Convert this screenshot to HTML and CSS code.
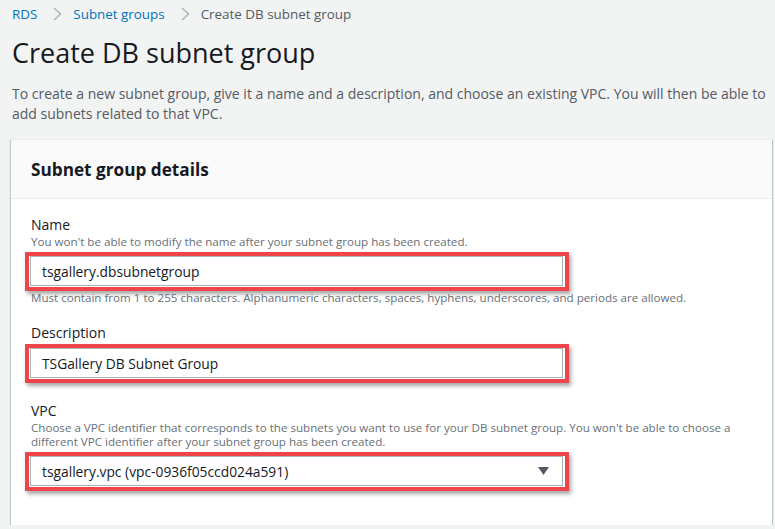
FILE: index.html
```html
<!DOCTYPE html>
<html>
<head>
<meta charset="utf-8">
<link rel="stylesheet" href="styles.css">
</head>
<body>
<div class="page">
  <nav class="crumbs">
    <a class="crumb-link">RDS</a>
    <svg class="chev" width="9" height="14" viewBox="0 0 9 14"><path d="M1 1 L7.5 7 L1 13" fill="none" stroke="#aab7b8" stroke-width="1.5"/></svg>
    <a class="crumb-link">Subnet groups</a>
    <svg class="chev" width="9" height="14" viewBox="0 0 9 14"><path d="M1 1 L7.5 7 L1 13" fill="none" stroke="#aab7b8" stroke-width="1.5"/></svg>
    <span class="crumb-current">Create DB subnet group</span>
  </nav>
  <h1 class="title">Create DB subnet group</h1>
  <p class="intro">To create a new subnet group, give it a name and a description, and choose an existing VPC. You will then be able to add subnets related to that VPC.</p>

  <section class="card">
    <header class="card-head">
      <h2>Subnet group details</h2>
    </header>
    <div class="card-body">
      <div class="field">
        <div class="label">Name</div>
        <div class="hint">You won't be able to modify the name after your subnet group has been created.</div>
        <div class="mark">
          <div class="input">tsgallery.dbsubnetgroup</div>
        </div>
        <div class="hint after">Must contain from 1 to 255 characters. Alphanumeric characters, spaces, hyphens, underscores, and periods are allowed.</div>
      </div>
      <div class="field">
        <div class="label">Description</div>
        <div class="mark tight">
          <div class="input">TSGallery DB Subnet Group</div>
        </div>
      </div>
      <div class="field">
        <div class="label">VPC</div>
        <div class="hint">Choose a VPC identifier that corresponds to the subnets you want to use for your DB subnet group. You won't be able to choose a different VPC identifier after your subnet group has been created.</div>
        <div class="mark">
          <div class="input select">
            <span>tsgallery.vpc (vpc-0936f05ccd024a591)</span>
            <svg width="11" height="8" viewBox="0 0 11 8"><path d="M0 0 H11 L5.5 8 Z" fill="#545b64"/></svg>
          </div>
        </div>
      </div>
    </div>
  </section>
</div>
</body>
</html>
```

FILE: styles.css
```css
html, body {
  margin: 0;
  padding: 0;
  background: #f2f3f3;
}
body {
  font-family: "Open Sans", "Noto Sans", sans-serif;
  color: #16191f;
  overflow: hidden;
}
.page {
  padding: 3px 3px 0 12px;
}
.crumbs {
  display: flex;
  align-items: center;
  font-size: 13.4px;
  height: 22px;
}
.crumb-link {
  color: #0073bb;
}
.crumb-current {
  color: #545b64;
}
.chev {
  margin: 0 11px 0 16px;
}
.title {
  margin: 8px 0 0;
  font-size: 27px;
  font-weight: 400;
  line-height: 40px;
  color: #16191f;
}
.intro {
  margin: 11px 0 0;
  font-size: 14px;
  line-height: 20px;
  color: #545b64;
  width: 760px;
}
.card {
  margin: 15px 0 0 -1px;
  width: 761px;
  background: #fff;
  border-top: 1px solid #eaeded;
  box-shadow: 0 1px 1px 0 rgba(0, 28, 36, 0.3), 1px 1px 1px 0 rgba(0, 28, 36, 0.15), -1px 1px 1px 0 rgba(0, 28, 36, 0.15);
}
.card-head {
  background: #fafafa;
  border-bottom: 1px solid #eaeded;
  height: 58px;
  display: flex;
  align-items: center;
  padding-left: 20px;
}
.card-head h2 {
  margin: 0;
  font-size: 17.2px;
  font-weight: 700;
  color: #16191f;
}
.card-body {
  padding: 16px 20px 34px 20px;
}
.field {
  margin-bottom: 18px;
}
.field:last-child {
  margin-bottom: 0;
}
.label {
  font-size: 14px;
  line-height: 20px;
  color: #16191f;
}
.hint {
  font-size: 11.6px;
  line-height: 14px;
  color: #687078;
}
.mark {
  box-sizing: border-box;
  margin: 3px 0 0 -6px;
  width: 544px;
  border: 4px solid #f0434a;
  padding: 0 2px 1px 1px;
  box-shadow: 2px 3px 4px rgba(0, 0, 0, 0.35);
}
.mark.tight {
  margin-top: 1px;
}
.input {
  box-sizing: border-box;
  border: 1px solid #aab7b8;
  height: 30px;
  display: flex;
  align-items: center;
  padding-left: 11px;
  font-size: 13.8px;
  color: #16191f;
  background: #fff;
}
.select {
  justify-content: space-between;
  padding-right: 13px;
}
```
